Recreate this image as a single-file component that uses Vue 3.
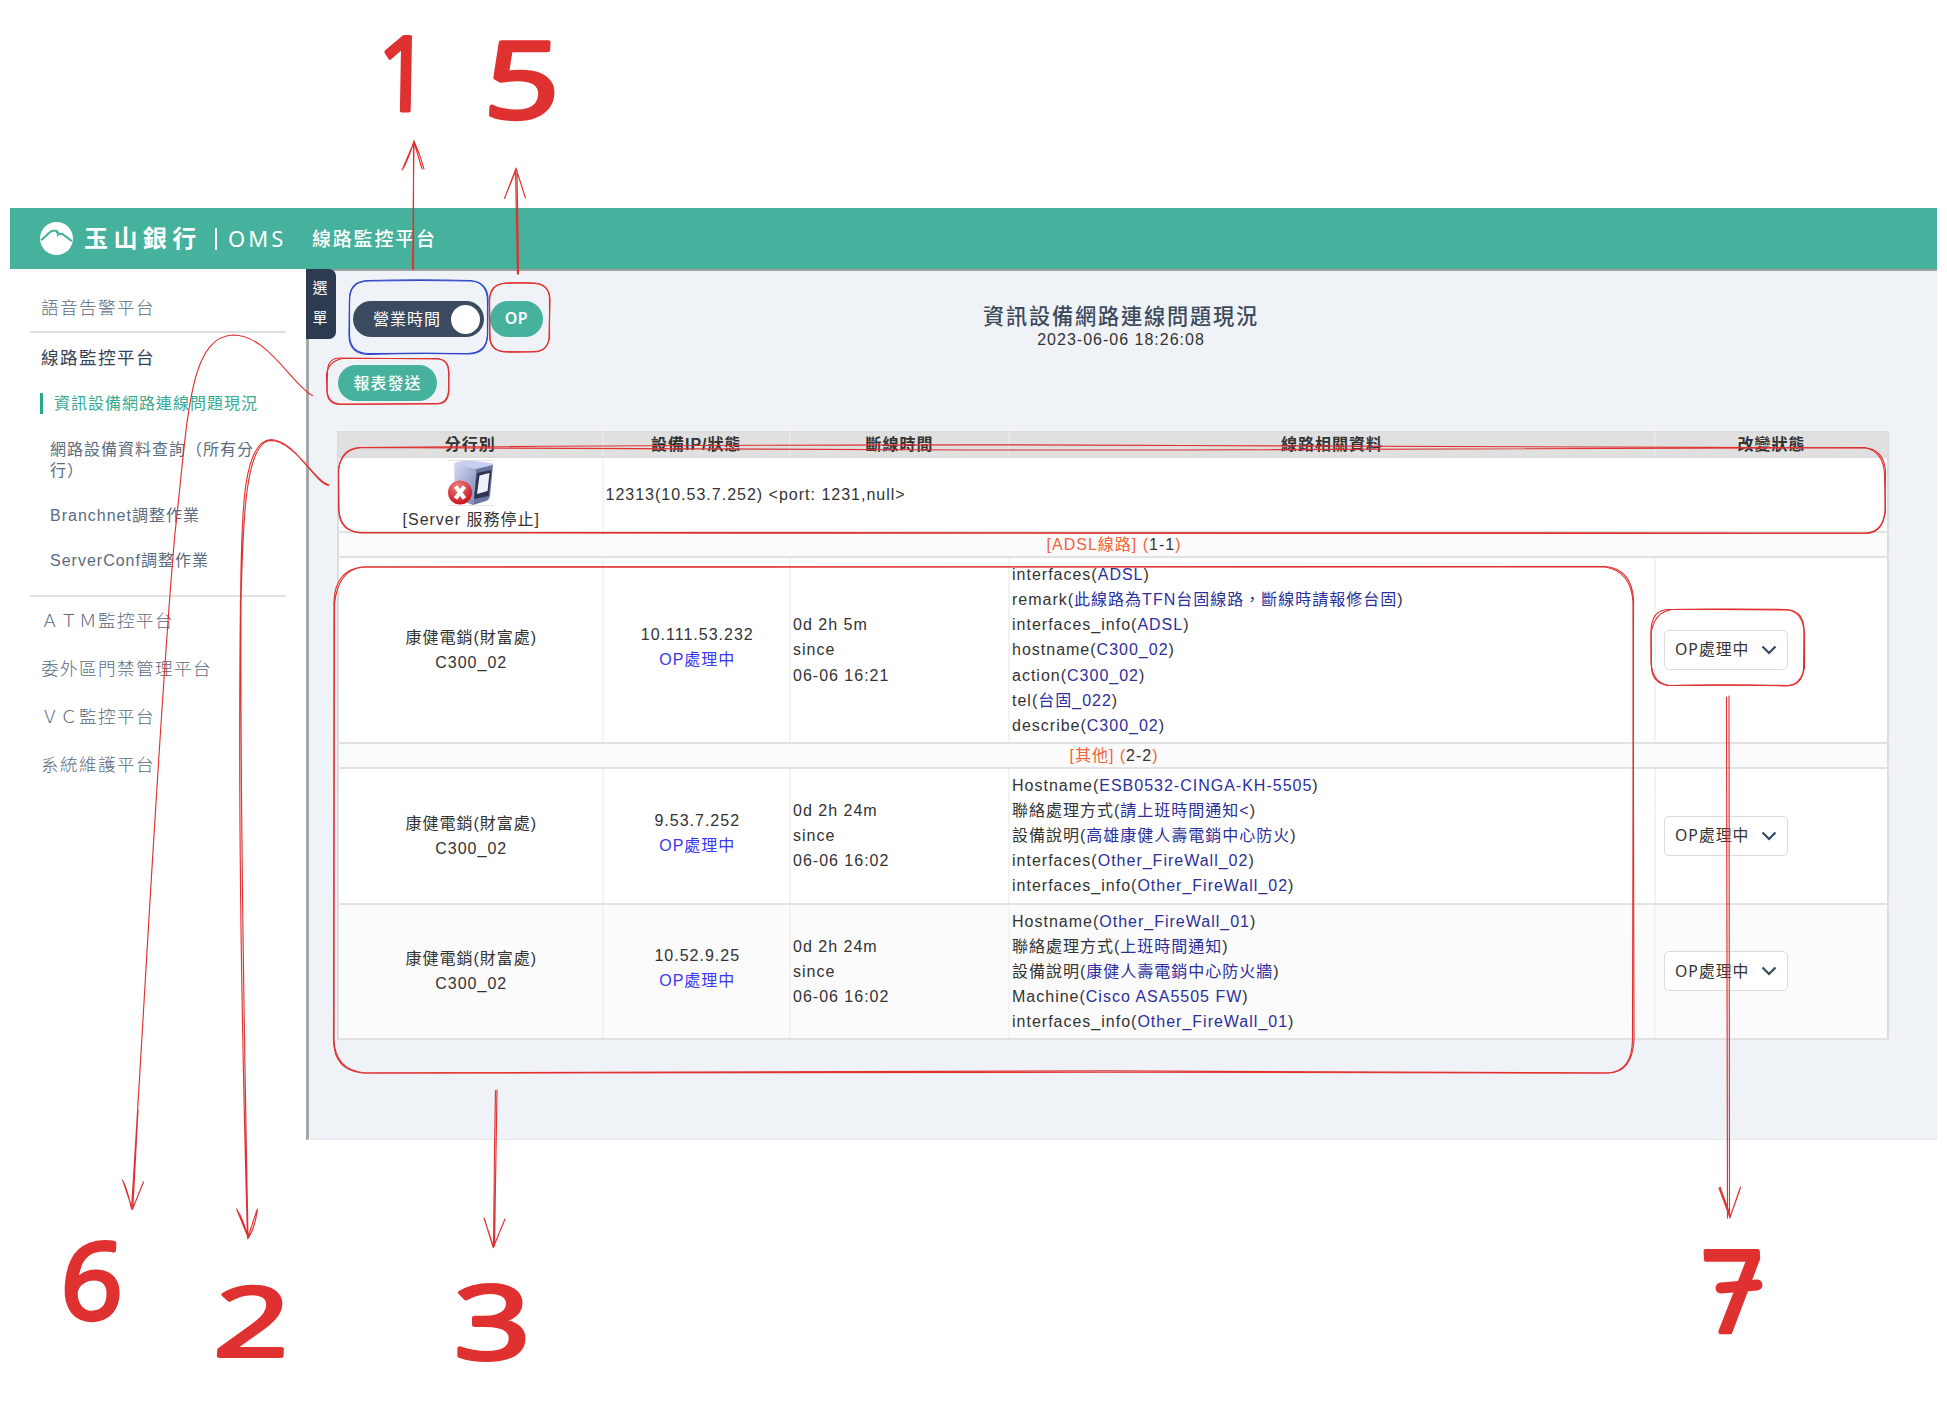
<script setup>
const subItems = ['網路設備資料查詢（所有分行）', 'Branchnet調整作業', 'ServerConf調整作業']
const platforms = ['ＡＴＭ監控平台', '委外區門禁管理平台', 'ＶＣ監控平台', '系統維護平台']
const headers = ['分行別', '設備IP/狀態', '斷線時間', '線路相關資料', '改變狀態']

const groups = [
  {
    name: '[ADSL線路]', count: '1-1',
    rows: [
      {
        ip: '10.111.53.232', down: '0d 2h 5m', since: '06-06 16:21', size: 'tall',
        info: [
          ['interfaces', 'ADSL'],
          ['remark', '此線路為TFN台固線路，斷線時請報修台固'],
          ['interfaces_info', 'ADSL'],
          ['hostname', 'C300_02'],
          ['action', 'C300_02'],
          ['tel', '台固_022'],
          ['describe', 'C300_02'],
        ],
      },
    ],
  },
  {
    name: '[其他]', count: '2-2',
    rows: [
      {
        ip: '9.53.7.252', down: '0d 2h 24m', since: '06-06 16:02', size: 'mid',
        info: [
          ['Hostname', 'ESB0532-CINGA-KH-5505'],
          ['聯絡處理方式', '請上班時間通知<'],
          ['設備說明', '高雄康健人壽電銷中心防火'],
          ['interfaces', 'Other_FireWall_02'],
          ['interfaces_info', 'Other_FireWall_02'],
        ],
      },
      {
        ip: '10.52.9.25', down: '0d 2h 24m', since: '06-06 16:02', size: 'mid alt',
        info: [
          ['Hostname', 'Other_FireWall_01'],
          ['聯絡處理方式', '上班時間通知'],
          ['設備說明', '康健人壽電銷中心防火牆'],
          ['Machine', 'Cisco ASA5505 FW'],
          ['interfaces_info', 'Other_FireWall_01'],
        ],
      },
    ],
  },
]
</script>

<template>
  <div class="board">
    <div class="app">
      <header class="bar">
        <svg class="logo" viewBox="0 0 32 32">
          <circle cx="16" cy="16" r="16" fill="#fff" />
          <path d="M1 17.500C6 14 8.500 9.500 12.500 8.500L16 8.500L19 12L21.500 11.500L31 18.500" fill="none" stroke="#46b19c" stroke-width="2" />
          <path d="M15.500 9L17.500 12.500L16.500 14" fill="none" stroke="#46b19c" stroke-width="1.300" />
        </svg>
        <span class="brand">玉山銀行</span>
        <span class="divider"></span>
        <span class="oms">OMS</span>
        <span class="section">線路監控平台</span>
      </header>

      <div class="body">
        <nav class="side">
          <div class="item first">語音告警平台</div>
          <div class="group">
            <div class="item current">線路監控平台</div>
            <div class="active">資訊設備網路連線問題現況</div>
            <div v-for="s in subItems" :key="s" class="sub">{{ s }}</div>
          </div>
          <div v-for="p in platforms" :key="p" class="item">{{ p }}</div>
        </nav>

        <main class="panel">
          <div class="tab"><span>選</span><span>單</span></div>
          <div class="top">
            <div class="tools">
              <div class="line">
                <div class="toggle"><span>營業時間</span><i class="knob"></i></div>
                <button class="pill op">OP</button>
              </div>
              <button class="pill report">報表發送</button>
            </div>
            <div class="title">
              <h1>資訊設備網路連線問題現況</h1>
              <p>2023-06-06 18:26:08</p>
            </div>
          </div>

          <table>
            <colgroup>
              <col class="c1" /><col class="c2" /><col class="c3" /><col class="c4" /><col class="c5" />
            </colgroup>
            <thead>
              <tr><th v-for="h in headers" :key="h">{{ h }}</th></tr>
            </thead>
            <tbody>
              <tr class="server">
                <td class="mid-text">
                  <svg class="srv" viewBox="0 0 46 46">
                    <defs>
                      <linearGradient id="side" x1="0" y1="0" x2="1" y2="1">
                        <stop offset="0" stop-color="#d5d9f4" /><stop offset="1" stop-color="#7d86b8" />
                      </linearGradient>
                      <radialGradient id="bad" cx=".4" cy=".25" r=".8">
                        <stop offset="0" stop-color="#f08080" /><stop offset="1" stop-color="#c60d17" />
                      </radialGradient>
                    </defs>
                    <path d="M0 .5H46M0 45.500H46" stroke="#e4e4e4" />
                    <path d="M6 4Q7 1 22 .5L43 3Q46 4 45 6L28 10Z" fill="#c9cff0" />
                    <path d="M6 4L28 9L25 45L7 38Z" fill="url(#side)" />
                    <path d="M28 9L45 5L42 36Q41 40 38 41L25 45Z" fill="#6a759f" />
                    <path d="M29 13L43.500 10L40.500 36L26 39Z" fill="#2d3550" />
                    <path d="M31.500 15.500L41.500 13L39.500 31L29 34Z" fill="#edf0fa" />
                    <circle cx="12" cy="32.500" r="12" fill="url(#bad)" />
                    <path d="M7.500 26.500L16.500 38.500M16.500 26.500L7.500 38.500" stroke="#fff" stroke-width="4.200" />
                  </svg>
                  <div>[Server 服務停止]</div>
                </td>
                <td colspan="4">12313(10.53.7.252) &lt;port: 1231,null&gt;</td>
              </tr>
              <template v-for="g in groups" :key="g.name">
                <tr class="cat">
                  <td colspan="5">{{ g.name }} (<b>{{ g.count }}</b>)</td>
                </tr>
                <tr v-for="r in g.rows" :key="r.ip" :class="r.size">
                  <td class="mid-text">康健電銷(財富處)<br />C300_02</td>
                  <td class="mid-text ip">{{ r.ip }}<br /><em>OP處理中</em></td>
                  <td>{{ r.down }}<br />since<br />{{ r.since }}</td>
                  <td>
                    <div v-for="[k, v] in r.info" :key="k">{{ k }}(<span class="val">{{ v }}</span>)</div>
                  </td>
                  <td class="state">
                    <div class="select">
                      <span>OP處理中</span>
                      <svg viewBox="0 0 16 10"><path d="M1.500 1.500L8 8L14.500 1.500" /></svg>
                    </div>
                  </td>
                </tr>
              </template>
            </tbody>
          </table>
        </main>
      </div>
    </div>

    <svg class="notes" viewBox="0 0 1947 1410">
      <g class="ink blue">
        <path d="M368 280.500Q420 279 470 280.500Q488 282 488 300L487.500 335Q487 354 468 354Q418 352.500 370 354.500Q349 355 349 335L349.500 300Q349 281 368 280.500Z" />
        <path d="M369 281Q420 280 471 281Q487 282 487.500 301V336Q486 353 468 353.500Q418 353 370 353.500Q350 354 349.500 335V300Q350 281 369 281Z" />
      </g>
      <g class="ink">
        <path d="M504 283.500Q520 282.500 535 283Q549 284 550 299L549 338Q548 351 534 351.500Q518 352.500 504 352Q490 350 490 336L489.500 300Q490 284 504 283.500Z" />
        <path d="M505 283Q520 282 535 283.500Q550 285 549.500 300V338Q547 352 534 352L504 351.500Q490 351 489.500 336V299Q491 285 505 283Z" />
        <path d="M340 358L438 359Q449 360 448.500 371L449 391Q448 404 437 404L340 404.500Q327 404 327 391L327.500 371Q328 358 340 358Z" />
        <path d="M343 358.500L438 358.500Q448 360 449 372L448.500 391Q447 404 436 403.500L341 404Q328 404 327 390L326.500 375Q328 361 343 358.500Z" />
        <path d="M360 447.500C600 446 900 443.500 1180 445.500S1700 449 1865 448Q1883 449 1885.500 470L1885 510Q1884 532 1865 533L360 532.500Q339 531 339 510L338.500 470Q341 448 360 447.500Z" />
        <path d="M362 447.500C600 449 900 450.500 1180 450S1700 447.500 1865 447.500Q1884 452 1884.500 475L1885.500 510Q1883 534 1865 533.500L360 533Q340 531 338.500 508V470Q341 449 362 447.500Z" />
        <path d="M362 567C700 565 1150 566 1605 566.500Q1632 569 1633.500 600L1632.500 1040Q1632 1072 1607 1073C1200 1070 750 1070 365 1073Q335 1070 334 1040L334 600Q336 570 362 567Z" />
        <path d="M364 567C700 569 1150 568 1605 567Q1631 571 1633 602L1634 1040Q1632 1073 1608 1073C1200 1072 750 1072 362 1073Q334 1070 333.500 1040L334.500 604Q338 569 364 567Z" />
        <path d="M1668 609.500Q1730 608.500 1785 609.500Q1804 610 1804 630L1803.500 670Q1802 685 1787 686Q1730 684 1670 685.500Q1651 684 1651.500 665L1651 630Q1652 610 1668 609.500Z" />
        <path d="M1672 609.500Q1730 609 1788 610Q1803 612 1804.500 634V668Q1800 686 1787 685.500Q1730 685 1668 685.500Q1652 682 1651 662V634Q1654 612 1672 609.500Z" />
        <path d="M412.500 269.500L414 141M413.500 269L413.500 142M402 170Q407 163 414 141Q420 154 424 169M403 168L414 142L422 169" />
        <path d="M517.500 274L515.500 169M518.500 274L517 170M504.500 198.500L516 168.500L525.500 198M505 197L516 170" />
        <path d="M312.500 395.500C292 385 268 335 233 335C188 337 188 420 175 533C160 700 145 1000 131.500 1209M132.800 1209L138 1110M122.500 1180Q127 1188 131 1207L132.500 1209L143.500 1182M123 1181L132 1208" />
        <path d="M329 485.500C314 483 295 440 271 439.500C240 441 242 530 240.500 600C238 800 242 1040 247.500 1238M329 485C314 481 296 442 271 440.500C244 441 243 530 241 600C240 800 245 1080 248 1238M236.500 1209Q244 1220 248 1238.500Q255 1228 257.500 1209M237 1210L248 1237L257 1210" />
        <path d="M495.500 1090.500L494.500 1150L493.500 1247M497 1090L494.500 1246M484 1218L493.500 1247L505 1219M484.500 1219L493 1247" />
        <path d="M1726.500 697L1727.500 1218M1729 696L1729.500 1217M1719 1188L1730 1217.500L1740.500 1187M1720 1187L1730.500 1216L1740 1189" />
      </g>
      <g class="digits">
        <text transform="translate(377 110) rotate(1) scale(.9 1.020)">1</text>
        <text transform="translate(483 118) skewX(-3) scale(1.300 1.050)">5</text>
        <text transform="translate(59 1319) skewX(-3) scale(1.080 1.050)">6</text>
        <text transform="translate(213 1356) skewX(-3) scale(1.300 .950)">2</text>
        <text transform="translate(454 1359) scale(1.330 1.020)">3</text>
        <text transform="translate(1705 1332) skewX(3) scale(1.080 1.120)">7</text>
        <path d="M1721 1288L1757 1285" />
      </g>
    </svg>
  </div>
</template>

<style>
body { background: #fff; }
</style>

<style scoped>
.board {
  position: relative;
  width: 1947px;
  height: 1410px;
  box-sizing: border-box;
  padding: 208px 10px 0;
  overflow: hidden;
  font-family: "Liberation Sans", "Noto Sans CJK TC", sans-serif;
  font-size: 16px;
  letter-spacing: 1px;
  color: #333;
}
.app { height: 932px; display: flex; flex-direction: column; }
.bar {
  height: 61px;
  flex: none;
  display: flex;
  align-items: center;
  padding-left: 30px;
  background: #46b19c;
  color: #fff;
  white-space: nowrap;
}
.logo { width: 33px; height: 33px; }
.brand { width: 131px; margin-left: 11px; font-size: 24px; line-height: 30px; font-weight: 700; letter-spacing: 5.4px; }
.divider { width: 2px; height: 22px; background: #fff; }
.oms { width: 84px; margin-left: 11px; padding-bottom: 2px; font-family: "Noto Sans", sans-serif; font-size: 22px; letter-spacing: 3px; }
.section { padding-bottom: 2px; font-size: 19px; font-weight: 500; letter-spacing: 1.800px; }
.body { flex: 1; display: flex; }
.side { width: 296px; flex: none; box-sizing: border-box; padding: 14px 20px 0; color: #5b6b80; }
.item { padding-left: 11px; height: 48px; line-height: 48px; font-size: 17.600px; letter-spacing: 1.400px; font-weight: 300; white-space: nowrap; }
.first { line-height: 50px; border-bottom: 2px solid #dcdfe2; }
.group { height: 262px; border-bottom: 2px solid #e0e2e5; }
.current { line-height: 50px; color: #33445a; font-weight: 400; }
.active { height: 21px; margin: 12px 0 25px 10px; padding-left: 11px; border-left: 3px solid #26a88f; line-height: 22px; letter-spacing: 1px; color: #35ab94; white-space: nowrap; }
.sub { margin: 0 20px 24px; line-height: 21px; }
.panel { position: relative; flex: 1; min-width: 0; border-left: 3px solid #a5a5a5; border-top: 2px solid #a0a0a0; border-bottom: 1px solid #e8e8e8; background: #eff3f8; padding: 30px 0 0 28px; box-sizing: border-box; }
.tab { position: absolute; left: -3px; top: -2px; width: 30px; height: 70px; padding-top: 4px; box-sizing: border-box; border-radius: 0 7px 7px 0; background: #2c3b50; color: #fff; display: flex; flex-direction: column; align-items: center; line-height: 30px; font-size: 15px; letter-spacing: 0; padding-right: 2px; }
.top { display: grid; height: 130px; }
.tools { grid-area: 1 / 1; }
.line { display: flex; gap: 6px; padding-left: 16px; margin-bottom: 28px; }
.toggle { width: 131px; height: 36px; box-sizing: border-box; border-radius: 18px; background: #3b4a5e; color: #fff; display: flex; align-items: center; justify-content: space-between; padding: 0 4px 0 20px; }
.toggle span { padding-bottom: 2px; }
.knob { width: 29px; height: 29px; border-radius: 50%; background: #fff; }
.pill { border: 0; height: 36px; border-radius: 18px; padding: 0 0 2px; background: #46b19c; color: #fff; font: inherit; font-weight: 500; letter-spacing: inherit; }
.op { width: 53px; font-family: "Noto Sans", sans-serif; font-weight: 600; letter-spacing: 0.500px; }
.report { display: block; width: 99px; margin-left: 1px; }
.title { grid-area: 1 / 1; justify-self: center; text-align: center; margin-right: 32px; line-height: 1; }
.title h1 { margin: 0; font-size: 21.200px; line-height: 32px; height: 30px; font-weight: 500; letter-spacing: 1.800px; color: #3d4a5c; }
.title p { margin: 0; line-height: 18px; }
table { width: 1550px; table-layout: fixed; border-collapse: collapse; border: 2px solid #dadcde; background: #fff; }
.c1 { width: 264.500px; }
.c2 { width: 187.500px; }
.c3 { width: 219px; }
.c4 { width: 646px; }
.c5 { width: 233px; }
th { height: 23px; padding: 0; line-height: 21px; background: #e0e0e0; border-left: 2px solid #e7e7e7; border-bottom: 2px solid #dcdcdc; font-weight: 600; }
td { padding: 0 0 0 2px; line-height: 25.100px; border-left: 2px solid #f3f3f3; border-bottom: 2px solid #e2e2e2; white-space: nowrap; box-sizing: border-box; }
th:first-child, td:first-child { border-left: 2px solid #dadcde; }
.mid-text { text-align: center; }
.server td { height: 75px; }
.server .mid-text { padding-top: 2px; line-height: 23px; }
.srv { display: block; width: 46px; height: 46px; margin: 0 auto 2px; }
.cat td { height: 25px; line-height: 23px; text-align: center; color: #f4623a; background: #fbfbfb; }
.cat b { font-weight: 400; color: #333; }
.tall td { height: 186px; }
.mid td { height: 135.500px; }
.alt td { background: #fbfbfb; }
.mid td.ip, .tall td.ip { padding-bottom: 6px; }
.ip em { font-style: normal; color: #3a36f0; }
.val { color: #2b2f9c; }
.state { padding-left: 8px; }
.select { width: 124px; height: 40px; box-sizing: border-box; border: 1.500px solid #dcdcdc; border-radius: 5px; background: #fff; display: flex; align-items: center; justify-content: space-between; padding: 0 10px; font-family: "Noto Sans", "Noto Sans CJK TC", sans-serif; font-size: 15.800px; }
.select svg { width: 16px; height: 10px; fill: none; stroke: #34495e; stroke-width: 2.200; }
.notes { position: absolute; left: 0; top: 0; width: 1947px; height: 1410px; pointer-events: none; }
.ink { fill: none; stroke: #e03131; stroke-width: 1.150; stroke-linecap: round; }
.blue { stroke: #3047c8; }
.digits { fill: #e03131; stroke: #e03131; stroke-width: 4; stroke-linejoin: round; stroke-linecap: round; font-family: "Open Sans", sans-serif; font-size: 101px; font-weight: 400; letter-spacing: 0; }
.digits path { stroke-width: 11; }
</style>
